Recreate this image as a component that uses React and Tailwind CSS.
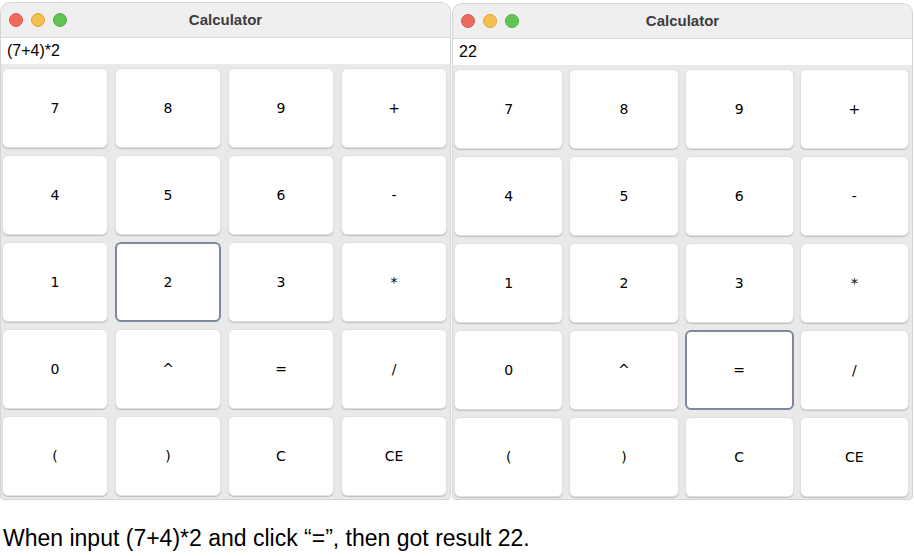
// App.jsx
const KEYS = ["7", "8", "9", "+", "4", "5", "6", "-", "1", "2", "3", "*", "0", "^", "=", "/", "(", ")", "C", "CE"];

function TrafficLights() {
  return (
    <div className="flex items-center gap-[8px] pl-[8px]">
      <span className="w-[14px] h-[14px] rounded-full bg-[#ed6a5e] border border-[#d9564b]" />
      <span className="w-[14px] h-[14px] rounded-full bg-[#f5bf4f] border border-[#dea63a]" />
      <span className="w-[14px] h-[14px] rounded-full bg-[#61c554] border border-[#4ead42]" />
    </div>
  );
}

function CalcWindow({ display, focused, wide }) {
  return (
    <div
      className={
        wide
          ? "w-[461px] h-[497px] mt-[1px] flex flex-col bg-[#e9e9e9] rounded-t-[10px] rounded-b-[4px] border border-[#d4d4d4] overflow-hidden"
          : "w-[451px] h-[498px] flex flex-col bg-[#e9e9e9] rounded-t-[10px] rounded-b-[4px] border border-[#d4d4d4] overflow-hidden"
      }
    >
      {/* ── Title bar ─────────────────────────── */}
      <div className="h-[35px] shrink-0 grid grid-cols-[1fr_auto_1fr] items-center bg-[#efefef] border-b border-[#d8d8d8]">
        <TrafficLights />
        <span className="font-['Liberation_Sans',Arial,sans-serif] font-bold text-[15px] text-[#3c3c3c]">Calculator</span>
        <span />
      </div>

      {/* ── Display ───────────────────────────── */}
      <div className="h-[26px] shrink-0 flex items-center bg-white px-[6px] font-['Liberation_Sans',Arial,sans-serif] text-[16px] text-black">
        {display}
      </div>

      {/* ── Keypad ────────────────────────────── */}
      <div
        className={
          wide
            ? "grid grid-cols-4 auto-rows-[80px] gap-x-[6px] gap-y-[7px] pl-[1px] pr-[3px] pt-[4px]"
            : "grid grid-cols-4 auto-rows-[80px] gap-x-[7px] gap-y-[7px] pl-[1px] pr-[3px] pt-[4px]"
        }
      >
        {KEYS.map((k) => (
          <button
            key={k}
            className={
              k === focused
                ? "flex items-center justify-center bg-white rounded-[6px] border-2 border-[#7c889c] font-['DejaVu_Sans',sans-serif] text-[14px] text-black"
                : "flex items-center justify-center bg-white rounded-[6px] border border-[#e0e0e0] shadow-[0_1px_1px_rgba(0,0,0,0.18)] font-['DejaVu_Sans',sans-serif] text-[14px] text-black"
            }
          >
            {k}
          </button>
        ))}
      </div>
    </div>
  );
}

export default function App() {
  return (
    <div className="w-[914px] h-[556px] bg-white overflow-hidden">
      <div className="flex items-start gap-[1px] pt-[2px]">
        <CalcWindow display="(7+4)*2" focused="2" />
        <CalcWindow display="22" focused="=" wide />
      </div>
      <p className="mt-[24px] pl-[3px] font-['Liberation_Sans',Arial,sans-serif] text-[23px] leading-[28px] text-black">
        When input (7+4)*2 and click “=”, then got result 22.
      </p>
    </div>
  );
}
